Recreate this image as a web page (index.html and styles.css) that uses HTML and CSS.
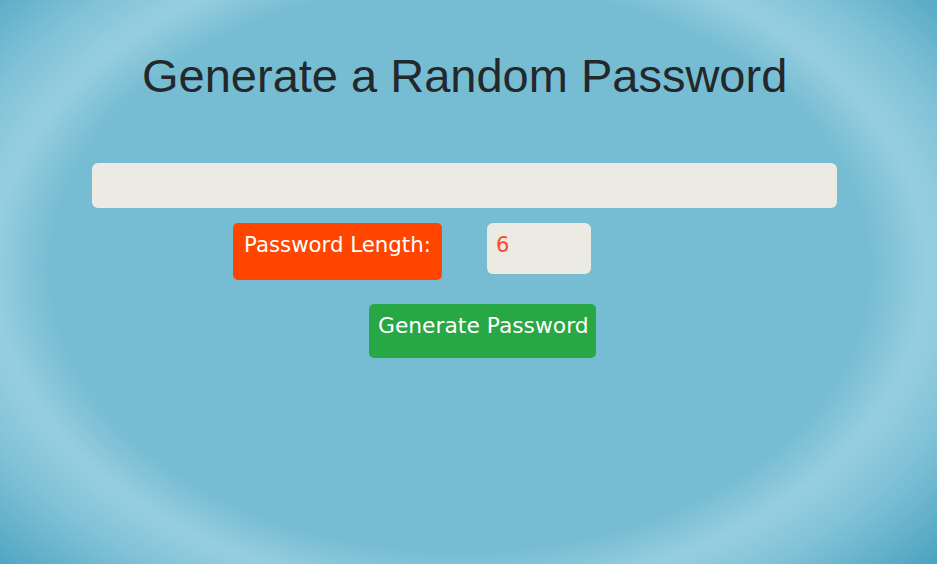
FILE: index.html
```html
<!DOCTYPE html>
<html lang="en">
<head>
<meta charset="utf-8">
<title>Random Password Generator</title>
<link rel="stylesheet" href="styles.css">
</head>
<body>
  <main class="app">
    <h1 class="title">Generate a Random Password</h1>
    <div class="output"></div>
    <div class="length-row">
      <label class="length-label">Password Length:</label>
      <div class="length-input">6</div>
    </div>
    <button class="generate">Generate Password</button>
  </main>
</body>
</html>
```

FILE: styles.css
```css
html, body {
  margin: 0;
  padding: 0;
  height: 100%;
}

body {
  min-height: 100vh;
  background: radial-gradient(ellipse 468px 325px at 460px 268px,
    #76bcd2 0%, #76bcd2 87%, #96cee0 100%, #82c3d8 112%, #4ca3c0 136%);
  background-color: #4ca3c0;
  font-family: "DejaVu Sans", sans-serif;
}

.app {
  display: flex;
  flex-direction: column;
  align-items: flex-start;
  padding: 49px 0 0 92px;
}

.title {
  margin: 0 0 0 50px;
  font-family: "Liberation Sans", Arial, sans-serif;
  font-weight: 400;
  font-size: 47px;
  line-height: 54px;
  color: #23282b;
}

.output {
  margin-top: 60px;
  width: 745px;
  height: 45px;
  border-radius: 6px;
  background: #ebeae3;
}

.length-row {
  display: flex;
  gap: 45px;
  margin: 15px 0 0 141px;
}

.length-label {
  box-sizing: border-box;
  width: 209px;
  height: 57px;
  padding: 10px 8px 0 11px;
  border-radius: 5px;
  background: #ff4500;
  color: #ffffff;
  font-size: 21.3px;
  line-height: 24px;
  white-space: nowrap;
}

.length-input {
  box-sizing: border-box;
  width: 104px;
  height: 51px;
  padding: 10px 9px 0;
  border-radius: 6px;
  background: #ebeae3;
  color: #ff4b1f;
  font-size: 21px;
  line-height: 24px;
}

.generate {
  box-sizing: border-box;
  margin: 24px 0 0 277px;
  width: 227px;
  height: 54px;
  padding: 9px 8px 20px 9px;
  border: none;
  border-radius: 5px;
  background: #28a745;
  color: #ffffff;
  font-family: "DejaVu Sans", sans-serif;
  font-size: 21.8px;
  line-height: 25px;
  text-align: left;
  white-space: nowrap;
}
```
